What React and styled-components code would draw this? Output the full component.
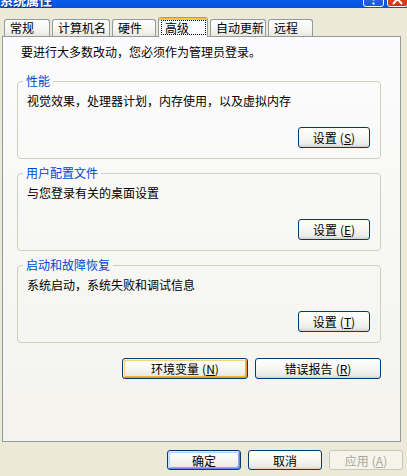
import React from "react";
import styled, { createGlobalStyle, css } from "styled-components";

const GlobalStyle = createGlobalStyle`
  html, body {
    margin: 0;
    padding: 0;
    background: #ece9d8;
  }
  body {
    font-family: "Noto Sans CJK SC", "Noto Sans", sans-serif;
    font-size: 12px;
    color: #000;
  }
`;

const Window = styled.div`
  width: 407px;
  height: 476px;
  background: #ece9d8;
  overflow: hidden;
  display: flex;
  flex-direction: column;
`;

// only the lower edge of the caption is inside the shot
const TitleBar = styled.div`
  flex: none;
  height: 8px;
  overflow: hidden;
  background: linear-gradient(180deg, #0a5ce6 0%, #0556e4 70%, #0a4fd0 100%);
  display: flex;
  align-items: flex-end;
  justify-content: space-between;
`;

const TitleText = styled.span`
  color: #fff;
  font-weight: bold;
  font-size: 13px;
  line-height: 13px;
  margin-bottom: 2px;
  text-shadow: 1px 1px 0 #0f1c8c;
  white-space: nowrap;
`;

const CaptionButtons = styled.div`
  display: flex;
  gap: 3px;
  margin-right: -1px;
  margin-bottom: 1px;
`;

const CaptionButton = styled.div`
  width: 21px;
  height: 21px;
  box-sizing: border-box;
  border: 1px solid #fff;
  border-radius: 3px;
  display: flex;
  align-items: flex-end;
  justify-content: center;
  background: ${({ $close }) =>
    $close
      ? "linear-gradient(180deg, #e8795c, #e0431f 60%, #c93713)"
      : "linear-gradient(180deg, #4d8ef7, #2663e0 60%, #1b56d6)"};
`;

const TabStrip = styled.div`
  flex: none;
  height: 19px;
  margin-top: 9px;
  padding-left: 4px;
  display: flex;
  align-items: flex-end;
  gap: 2px;
  position: relative;
  z-index: 1;
`;

const Tab = styled.div`
  width: ${({ $w }) => $w}px;
  height: 17px;
  box-sizing: border-box;
  border: 1px solid #919b9c;
  border-bottom: none;
  border-radius: 3px 3px 0 0;
  background: linear-gradient(180deg, #fefefe 0%, #f6f5f1 60%, #e9e7de 100%);
  padding-left: 5px;
  line-height: 16px;
  white-space: nowrap;

  ${({ $active }) =>
    $active &&
    css`
      height: 20px;
      margin-bottom: -1px;
      padding-left: 2px;
      background: #fcfcfe;
      border-top-color: #e68b2c;
      box-shadow: inset 0 2px 0 #ffc73c;
    `}
`;

const FocusLabel = styled.span`
  display: block;
  margin: 2px 1px 0 0;
  height: 15px;
  box-sizing: border-box;
  border: 1px dotted #000;
  padding-left: 3px;
  line-height: 13px;
`;

const Panel = styled.div`
  flex: none;
  margin-left: 2px;
  width: 399px;
  height: 406px;
  box-sizing: border-box;
  border: 1px solid #919b9c;
  background: linear-gradient(180deg, #fcfcfe 0%, #f8f8f6 40%, #f4f3ee 100%);
  padding: 8px 0 0 14px;
  display: flex;
  flex-direction: column;
`;

const Intro = styled.div`
  line-height: 14px;
  margin-left: 4px;
`;

const Group = styled.fieldset`
  margin: 15px 0 0;
  width: 364px;
  min-width: 0;
  box-sizing: border-box;
  padding: 0 10px 10px 0;
  border: 1px solid #d0d0bf;
  border-radius: 4px;

  & + & {
    margin-top: 7px;
  }
`;

const Legend = styled.legend`
  margin-left: 5px;
  padding: 0 3px;
  color: #0046d5;
  font-size: 12px;
  line-height: 14px;
`;

const GroupText = styled.div`
  padding: 6px 0 0 9px;
  line-height: 14px;
`;

const ButtonRow = styled.div`
  display: flex;
  justify-content: flex-end;
  gap: 7px;
  margin-top: ${({ $top }) => $top}px;
  padding-right: ${({ $right }) => $right || 0}px;
`;

const rings = {
  default: css`
    box-shadow: inset 1px 1px 0 #cee7ff, inset -1px -1px 0 #6982ee,
      inset 2px 2px 0 #bcd4f6, inset -2px -2px 0 #89ade4;
  `,
  hot: css`
    box-shadow: inset 1px 1px 0 #fff0cf, inset -1px -1px 0 #e5a01a,
      inset 2px 2px 0 #fcd278, inset -2px -2px 0 #f8b330;
  `,
};

const Button = styled.button`
  width: ${({ $w }) => $w}px;
  height: ${({ $h }) => $h || 21}px;
  box-sizing: border-box;
  padding: 0;
  border: 1px solid #003c74;
  border-radius: 3px;
  background: linear-gradient(180deg, #ffffff 0%, #f7f7f4 45%, #ecebe6 85%, #d6d0c5 100%);
  font-family: "Noto Sans CJK SC", "Noto Sans", sans-serif;
  font-size: 12px;
  line-height: 17px;
  color: #000;
  white-space: nowrap;
  ${({ $ring }) => rings[$ring]}

  &:disabled {
    border-color: #c9c7ba;
    background: #f5f4ea;
    color: #aca899;
  }
`;

const Key = styled.span`
  margin-left: 3px;
  & u {
    text-underline-offset: 1px;
  }
`;

const Mnemonic = ({ k }) => (
  <Key>
    (<u>{k}</u>)
  </Key>
);

const tabs = [
  { label: "常规", w: 46 },
  { label: "计算机名", w: 58 },
  { label: "硬件", w: 44 },
  { label: "高级", w: 50, active: true },
  { label: "自动更新", w: 56 },
  { label: "远程", w: 45 },
];

const groups = [
  { title: "性能", text: "视觉效果，处理器计划，内存使用，以及虚拟内存", key: "S" },
  { title: "用户配置文件", text: "与您登录有关的桌面设置", key: "E" },
  { title: "启动和故障恢复", text: "系统启动，系统失败和调试信息", key: "T" },
];

export default function App() {
  return (
    <>
      <GlobalStyle />
      <Window>
        <TitleBar>
          <TitleText>系统属性</TitleText>
          <CaptionButtons>
            <CaptionButton>
              <svg width="9" height="14" viewBox="0 0 9 14">
                <path d="M2 4 Q2 1 4.5 1 Q7 1 7 3.5 Q7 5 5.5 6 Q4.5 6.7 4.5 8.5" stroke="#fff" strokeWidth="2" fill="none" />
                <rect x="3.5" y="10.5" width="2" height="2" fill="#fff" />
              </svg>
            </CaptionButton>
            <CaptionButton $close>
              <svg width="11" height="13" viewBox="0 0 11 13">
                <path d="M1 1 L10 11 M10 1 L1 11" stroke="#fff" strokeWidth="2" />
              </svg>
            </CaptionButton>
          </CaptionButtons>
        </TitleBar>

        <TabStrip>
          {tabs.map((t) => (
            <Tab key={t.label} $w={t.w} $active={t.active}>
              {t.active ? <FocusLabel>{t.label}</FocusLabel> : t.label}
            </Tab>
          ))}
        </TabStrip>

        <Panel>
          <Intro>要进行大多数改动，您必须作为管理员登录。</Intro>

          {groups.map((g) => (
            <Group key={g.title}>
              <Legend>{g.title}</Legend>
              <GroupText>{g.text}</GroupText>
              <ButtonRow $top={19}>
                <Button $w={72}>
                  设置<Mnemonic k={g.key} />
                </Button>
              </ButtonRow>
            </Group>
          ))}

          <ButtonRow $top={15} style={{ width: 364 }} $right={2}>
            <Button $w={126} $ring="hot">
              环境变量<Mnemonic k="N" />
            </Button>
            <Button $w={126}>
              错误报告<Mnemonic k="R" />
            </Button>
          </ButtonRow>
        </Panel>

        <ButtonRow $top={8} $right={4}>
          <Button $w={74} $h={20} $ring="default">确定</Button>
          <Button $w={74} $h={20}>取消</Button>
          <Button $w={74} $h={20} disabled>
            应用<Mnemonic k="A" />
          </Button>
        </ButtonRow>
      </Window>
    </>
  );
}
